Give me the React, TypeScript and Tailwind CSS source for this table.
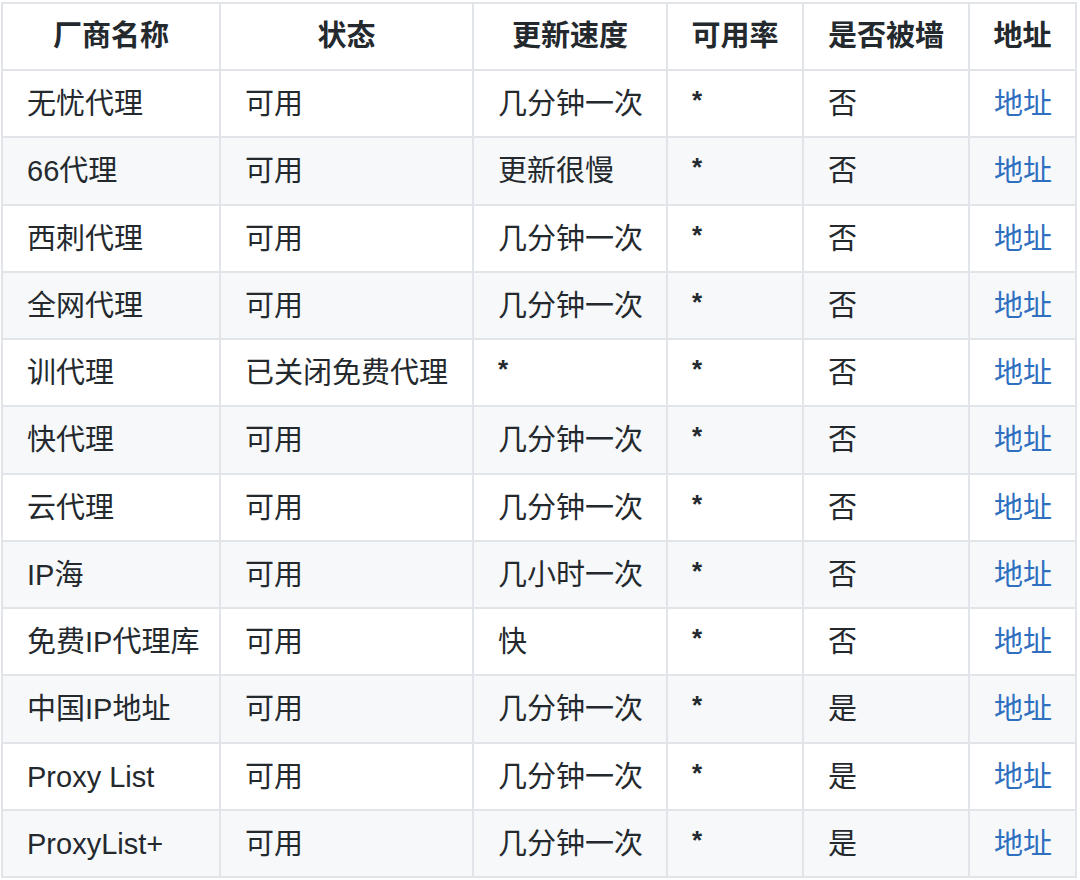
const headers = ['厂商名称', '状态', '更新速度', '可用率', '是否被墙', '地址']

const colWidths = ['w-[218px]', 'w-[253px]', 'w-[194px]', 'w-[136px]', 'w-[166px]', 'w-[107px]']

const rows: [string, string, string, string, string][] = [
  ['无忧代理', '可用', '几分钟一次', '*', '否'],
  ['66代理', '可用', '更新很慢', '*', '否'],
  ['西刺代理', '可用', '几分钟一次', '*', '否'],
  ['全网代理', '可用', '几分钟一次', '*', '否'],
  ['训代理', '已关闭免费代理', '*', '*', '否'],
  ['快代理', '可用', '几分钟一次', '*', '否'],
  ['云代理', '可用', '几分钟一次', '*', '否'],
  ['IP海', '可用', '几小时一次', '*', '否'],
  ['免费IP代理库', '可用', '快', '*', '否'],
  ['中国IP地址', '可用', '几分钟一次', '*', '是'],
  ['Proxy List', '可用', '几分钟一次', '*', '是'],
  ['ProxyList+', '可用', '几分钟一次', '*', '是'],
]

function Cell({ text }: { text: string }) {
  // asterisks sit high in the line, like the source font
  if (text === '*') {
    return <span className="relative top-[-5px] text-[26px] font-bold">*</span>
  }
  return <>{text}</>
}

export default function App() {
  return (
    <div
      className="min-h-[880px] bg-white pl-[1px] pt-[2px] text-[#24292e]"
      style={{ fontFamily: '"Liberation Sans", "Noto Sans CJK SC", sans-serif' }}
    >
      <table className="w-[1076px] table-fixed border-collapse text-[29px] leading-none">
        <colgroup>
          {colWidths.map((w, i) => (
            <col key={i} className={w} />
          ))}
        </colgroup>
        <thead>
          <tr className="h-[67px] bg-white">
            {headers.map((h) => (
              <th key={h} className="border-2 border-[#e1e4e8] px-0 text-center font-bold whitespace-nowrap">
                {h}
              </th>
            ))}
          </tr>
        </thead>
        <tbody>
          {rows.map((row, i) => (
            <tr key={i} className={`h-[67.25px] ${i % 2 === 1 ? 'bg-[#f6f8fa]' : 'bg-white'}`}>
              {row.map((c, j) => (
                <td key={j} className="border-2 border-[#e1e4e8] pl-[24px] pr-0 pt-[2px] text-left whitespace-nowrap">
                  <Cell text={c} />
                </td>
              ))}
              <td className="border-2 border-[#e1e4e8] pl-[24px] pr-0 pt-[2px] text-left whitespace-nowrap">
                <a href="#" className="text-[#2f6fc0]">地址</a>
              </td>
            </tr>
          ))}
        </tbody>
      </table>
    </div>
  )
}
